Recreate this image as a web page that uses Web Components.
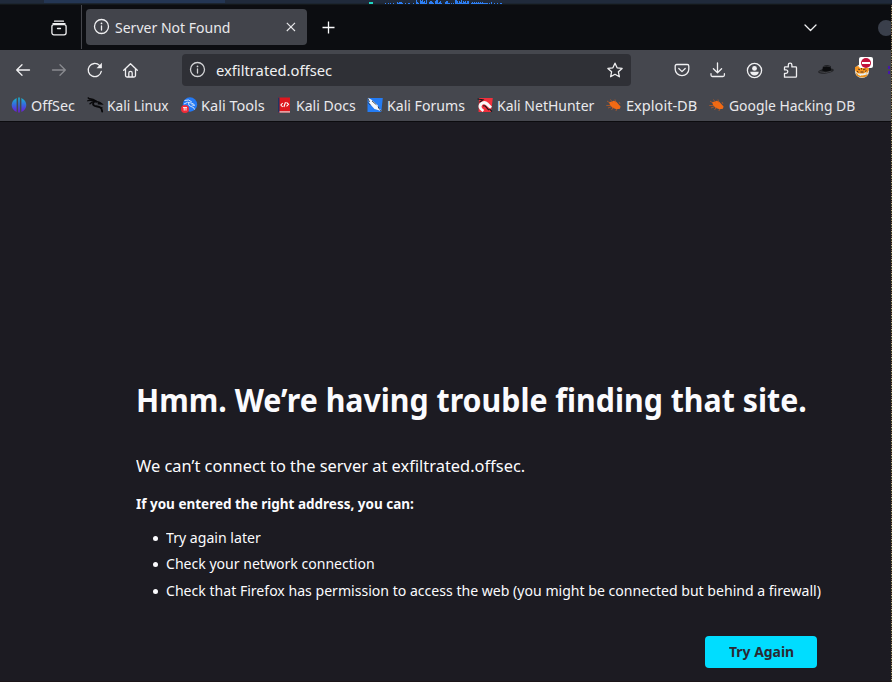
<!DOCTYPE html>
<html lang="en">
<head>
<meta charset="utf-8">
<title>Server Not Found</title>
<style>
html,body{margin:0;height:100%;overflow:hidden;background:#1c1b22}
body{font-family:"Noto Sans",sans-serif;color:#fbfbfe}
</style>
</head>
<body>
<browser-window></browser-window>
<script>
const define = (name, html, setup) => customElements.define(name, class extends HTMLElement {
  connectedCallback() {
    if (this.shadowRoot) return;
    const root = this.attachShadow({mode: 'open'});
    const t = document.createElement('template');
    t.innerHTML = html;
    root.append(t.content.cloneNode(true));
    if (setup) setup(this, root);
  }
});

/* Label condensed or widened horizontally so that it fills the given width */
define('ui-label', `<style>
:host{display:block;white-space:nowrap;flex:none}
span{display:inline-block;white-space:nowrap;transform-origin:0 50%}
</style><span><slot></slot></span>`, (el, root) => {
  const span = root.querySelector('span');
  const target = parseFloat(el.getAttribute('width'));
  el.style.width = target + 'px';
  const fit = () => {
    const natural = span.offsetWidth;
    if (natural) span.style.transform = `scaleX(${(target / natural).toFixed(4)})`;
  };
  fit();
  new ResizeObserver(fit).observe(span);
});

const line = b => `<g fill="none" stroke="#f0f0f2" stroke-width="1.300" stroke-linecap="round" stroke-linejoin="round">${b}</g>`;
const bug = `<path d="M3 5l2.500-.3 2-1 2.800 1 2.700 3 1.600 1.700-.7 2.300-3.200.6-3.900-1.400-2.600-2.400z" fill="#f26a14"/><path d="M1 4l3 2M.3 8.500h4M2 11l4-1.500M4.500 2.500l2 3M9 2.500l.5 3M5.500 13l2-3M14 7l-1-2M10 14l.5-2" stroke="#c95c20" stroke-width=".7" fill="none"/>`;
const icons = {
  view: line(`<path d="M3.500 1.200h9M2 3.600h12"/><rect x=".9" y="4.600" width="14.200" height="10.200" rx="2"/><path d="M6.500 8.500h3"/>`),
  info: line(`<circle cx="7.500" cy="7.500" r="7"/><path d="M7.500 7v4"/><path d="M7.500 4.300v.1" stroke-width="1.700"/>`),
  close: `<path d="M3.800 3.800l8.200 8.200M12 3.800l-8.200 8.200" stroke="#e8e8eb" stroke-width="1.100"/>`,
  plus: `<path d="M7.500 1.500v12M1.500 7.500h12" stroke="#fbfbfe" stroke-width="1.300"/>`,
  chevron: line(`<path d="M3 5l5.500 5.500L14 5"/>`),
  back: line(`<path d="M14.500 8H1.700M7 2.700L1.700 8 7 13.300"/>`),
  forward: line(`<path d="M1.500 8h12.800M9 2.700L14.300 8 9 13.300"/>`),
  reload: `<path d="M14.300 9.300A6.600 6.600 0 1 1 12.500 3.400" fill="none" stroke="#f0f0f2" stroke-width="1.300" stroke-linecap="round"/><path d="M14.900.8v5.400H9.500z" fill="#f0f0f2"/>`,
  home: line(`<path d="M.7 8.300L7.500 1.700 14.300 8.300M2.500 7v6.500q0 1.500 1.500 1.500h7q1.500 0 1.500-1.500V7M5.800 14.700v-3.600q0-1.700 1.700-1.700t1.700 1.700v3.600"/>`),
  star: line(`<path d="M8 1.200l2.100 4.600 5 .6-3.700 3.400 1 5L8 12.300l-4.400 2.500 1-5L.9 6.400l5-.6z"/>`),
  pocket: line(`<path d="M2.700 2.500h10.600q1.500 0 1.500 1.500v3.300a6.800 6.400 0 0 1-13.600 0V4Q1.200 2.500 2.700 2.500zM4.800 6.500L8 9.600l3.200-3.100"/>`),
  download: line(`<path d="M7.500 1v9.500M3.400 6.700L7.500 10.700l4.100-4M1 11.700v1.300q0 1.500 1.500 1.500h10.400q1.500 0 1.500-1.500v-1.300"/>`),
  account: line(`<circle cx="8.500" cy="8.500" r="7.100"/>`) + `<circle cx="8.500" cy="6.400" r="2.400" fill="#f0f0f2"/><path d="M4.200 9.800h8.600q-.6 3.700-4.300 3.800Q4.800 13.500 4.200 9.800z" fill="#f0f0f2"/>`,
  puzzle: line(`<path d="M2.500 15.200v-3.900h1.600a1.700 1.700 0 0 0 0-3.400H2.500V5.500q0-.6.6-.6h3.200V3a1.700 1.700 0 0 1 3.600 0v1.900h3.800q.8 0 .8.800v8.600q0 .9-.9.900z"/>`),
  hat: `<ellipse cx="8" cy="9" rx="7.900" ry="2.500" fill="#222326" transform="rotate(-7 8 9)"/><path d="M4.300 8.500L5 4.200q3.500-1.600 7.500-.3l.7 4.500q-4 2-8.900.1z" fill="#0b0c0e"/><path d="M1.500 9.700q6 2.200 12-.6" stroke="#55575c" stroke-width=".6" fill="none"/><path d="M5 4.600q3-.8 7 0" stroke="#44464b" stroke-width=".6" fill="none"/>`,
  fox: `<circle cx="8" cy="9" r="7" fill="#eef0ed"/><path d="M1 5l3-1 2 1.500h5L14 3l1 5-2 3.500H4L1.300 9z" fill="#f7941d"/><path d="M2 10.500Q6 15.500 14 12l-1.500 2.500Q7 17 2.500 13.500z" fill="#e8901c"/><path d="M4 7l2 .8M9 7.800l2.500-.8M6.500 10h3M3 9.200l1.500 1M11 9.500l1.500-1M7.500 6v1.500" stroke="#463223" stroke-width=".9"/><path d="M4 12l3 1.500M10 12l2.500-1.500" stroke="#d9f0f5" stroke-width="1.200"/>`,
  offsec: `<defs><linearGradient id="g" x2="0" y2="1"><stop offset="0" stop-color="#18b5cf"/><stop offset=".5" stop-color="#3767de"/><stop offset="1" stop-color="#6d19d8"/></linearGradient></defs><g fill="url(#g)"><path d="M5.600 1v14Q.7 12.500.7 8T5.600 1zM10.400 1v14q4.900-2.500 4.900-7t-4.900-7z"/><path d="M7.200.6h1.600v14.800H7.200z"/></g>`,
  kali: `<g fill="none" stroke="#09090b" stroke-linecap="round"><path d="M1.200.900L2.300 1.800Q6 1.600 9.500 4.300M.9 3.700Q4.500 2.600 8.500 4.500M3 6.700Q5.500 4 9.500 4.800" stroke-width="1.400"/><path d="M7 4.800q-2.400 2.800.8 4.100 2.700.7 4.600 1.100 2.500 1 2.800 4.600" stroke-width="1.800"/><path d="M8.500 4.500q3.500-.2 6 2.300l-3-.2" stroke-width="1.700"/><path d="M13.300 10.300l2 .5" stroke-width="1"/></g>`,
  tools: `<circle cx="9" cy="7.500" r="7.200" fill="#2479f4"/><path d="M3.500 3.500q4.500-1.700 7.300 1.400M3 7q3.500-3 7-1 3.500.7 3.500 2.500l-3-.7M7.500 5.500Q7 9 10 9.500q3.500.7 3.500 3" fill="none" stroke="#cfe2fb" stroke-width="1"/><circle cx="4" cy="12" r="4" fill="#f02b38"/><path d="M2 10.600h4M3.200 10.600v3M5 10.600v3" stroke="#fff" stroke-width=".9"/>`,
  docs: `<path d="M2 .5h12v15H2z" fill="#de171e"/><path d="M2 .5h1.500v15H2z" fill="#203563"/><path d="M3.500 14.300H14v1.200H3.500z" fill="#e9d9d9"/><path d="M6.700 6L4.900 8l1.800 2M10.500 5.300L12.500 7.300l-2 2M9.500 5.300L7.900 10" fill="none" stroke="#fff" stroke-width="1.100"/>`,
  forums: `<path d="M.5 1h15.300l-1.500 14H.5z" fill="#247cf4"/><path d="M.5.500l4 2.300 6 5.300 1 2.700 4 4-4.500-1.700-3.500-1L2.500 6.500z" fill="#f5f7fa"/><path d="M.5.500l2 4.500M1 5.500l2.500 2.700M5 4l4.500 3.800M11 9.500l1.500 3M13 13.300l2.500 1.500" stroke="#202735" stroke-width=".8"/>`,
  hunter: `<path d="M2 1h13.800l-1.700 14H1.500z" fill="#f1303c"/><path d="M2.700 12.500Q0 9 3.200 5.600q4.300-3.400 8 .2l3.800 4-2 2-4-3.600Q6.800 6.500 5.200 8q-1.500 1.700 0 3.200l2 1.800-1.600 2z" fill="#f8f8f8"/><path d="M.5 2l5.500.8L2.500 5.300M6 9q2-.8 2.800.7l3 3.500M12.400 11.800l2.600 2.700" stroke="#16171b" stroke-width="1.100" fill="none"/>`,
  bug
};
define('ui-icon', `<style>:host{display:block;flex:none;width:16px;height:16px}svg{display:block;width:100%;height:100%;overflow:visible}</style>`, (el, root) => {
  const t = document.createElement('template');
  t.innerHTML = `<svg viewBox="0 0 16 16">${icons[el.getAttribute('name')]}</svg>`;
  root.append(t.content);
});

/* Strip of the desktop panel above the window, with its activity graph */
const bars = [75,1,84,1,90,1,99,1,111,2,114,1,117,2,120,2,123,2,126,1,135,1,144,1,147,1,159,1,168,4,171,2,174,1,180,4,183,3,186,4,189,2,192,3,195,1,198,4,207,2,210,3,213,3,216,2,219,1,225,3,228,4,231,4,234,1,237,2,240,3,243,1,255,2,258,3,261,3,264,1,267,1,273,1,279,1,285,4,288,4,291,3,294,1,297,3,300,2,303,4,306,1,309,3,312,2,315,3,318,1,321,3,324,3,333,1,336,2,339,1,342,2,345,1,348,2,351,1,354,2,357,1,360,2,363,1,366,2,369,1,372,1,375,1,378,1,381,1,387,1,393,2,402,1,411,1,420,1,423,1];
let rects = '';
for (let i = 0; i < bars.length; i += 2) rects += `<rect x="${360 + bars[i] / 3}" y="${4 - bars[i + 1]}" width="1" height="${bars[i + 1]}"/>`;
define('desktop-strip', `<style>:host{display:block;height:5px;background:linear-gradient(#202a3b 0 3px,#1c2531 3px 4px,#14181b 4px)}svg{display:block}</style>
<svg width="892" height="4" shape-rendering="crispEdges"><rect x="44" width="181" height="3" fill="#243654"/><rect x="369" y="2" width="4" height="2" fill="#20d5c0"/><g fill="#2d7ff5">${rects}</g></svg>`);

define('tab-bar', `<style>
:host{display:flex;height:45px;background:#0c0d11;align-items:center;font-size:15px;overflow:hidden;color:#e9e9ec}
.view{width:81px;box-sizing:border-box;padding-left:51px}
.sep{width:1px;height:44px;background:#45464c;align-self:flex-start}
.tab{margin:-1px 0 0 4px;width:221px;height:36px;border-radius:4px;background:#42444b;display:flex;align-items:center;padding:0 8px;box-sizing:border-box}
.tab ui-label{margin-left:5px}
.close{margin-left:auto}
.plus{margin-left:14px}
.chev{margin-left:auto;margin-right:60px}
.dot{width:16px;height:16px;border-radius:50%;background:#3a3f4b;margin-right:-2px;flex:none}
</style>
<div class="view"><ui-icon name="view"></ui-icon></div><div class="sep"></div>
<div class="tab"><ui-icon name="info"></ui-icon><ui-label width="115"><slot></slot></ui-label><ui-icon class="close" name="close"></ui-icon></div>
<ui-icon class="plus" name="plus"></ui-icon><ui-icon class="chev" name="chevron"></ui-icon><div class="dot"></div>`);

define('nav-bar', `<style>
:host{display:flex;height:40px;align-items:center;padding-left:15px;box-sizing:border-box;font-size:15px;color:#f0f0f2}
.nav{display:flex;gap:20px;width:167px}
.url{width:449px;height:32px;border-radius:4px;background:#2f3036;display:flex;align-items:center;box-sizing:border-box;padding:0 8px}
.url ui-label{margin-left:10px}
.star{margin-left:auto}
.tools{display:flex;gap:20px;margin-left:43px;align-items:center}
.ext{position:relative}
.badge{position:absolute;left:5px;top:-5px;width:14px;height:11px;background:#fff;border-radius:2px;display:grid;place-items:center}
.badge i{width:10px;height:10px;border-radius:50%;background:#c3123c;display:grid;place-items:center}
.badge i::after{content:"";width:8px;height:2px;background:#fff}
.more{width:2px;height:8px;background:linear-gradient(#4518a8 3px,transparent 3px 5px,#4518a8 5px);position:absolute;left:34px;top:4px}
</style>
<div class="nav"><ui-icon name="back"></ui-icon><ui-icon name="forward" style="opacity:.4"></ui-icon><ui-icon name="reload"></ui-icon><ui-icon name="home"></ui-icon></div>
<div class="url"><ui-icon name="info" style="opacity:.85"></ui-icon><ui-label width="116"><slot></slot></ui-label><ui-icon class="star" name="star"></ui-icon></div>
<div class="tools"><ui-icon name="pocket"></ui-icon><ui-icon name="download"></ui-icon><ui-icon name="account"></ui-icon><ui-icon name="puzzle"></ui-icon><ui-icon name="hat"></ui-icon><div class="ext"><ui-icon name="fox"></ui-icon><span class="badge"><i></i></span><span class="more"></span></div></div>`);

define('book-mark', `<style>:host{display:flex;align-items:center;gap:4px}</style><ui-icon></ui-icon><slot></slot>`, (el, root) => {
  const old = root.querySelector('ui-icon'), n = document.createElement('ui-icon');
  n.setAttribute('name', el.getAttribute('icon'));
  old.replaceWith(n);
});

const marks = [['offsec','OffSec',44],['kali','Kali Linux',62],['tools','Kali Tools',64],['docs','Kali Docs',60],['forums','Kali Forums',78],['hunter','Kali NetHunter',97],['bug','Exploit-DB',71],['bug','Google Hacking DB',126]];
define('bookmarks-bar', `<style>:host{display:grid;grid-template-columns:76px 93.500px 95px 91.500px 109.500px 129.500px 103px 1fr;height:30px;align-items:center;padding-left:11px;font-size:15px;box-sizing:border-box;color:#e9e9ec}</style>
${marks.map(([i, t, w]) => `<book-mark icon="${i}"><ui-label width="${w}">${t}</ui-label></book-mark>`).join('')}`);

define('retry-button', `<style>:host{display:grid;place-items:center;width:112px;height:32px;border-radius:4px;background:#00ddff;color:#2b2a33;font-size:15px;font-weight:700;margin-left:569px;box-sizing:border-box;padding-bottom:2px}</style><ui-label width="65"><slot></slot></ui-label>`);

define('error-page', `<style>
:host{display:block;padding:252px 0 0 136px;box-sizing:border-box;flex:1;background:#1c1b22;overflow:hidden;border-bottom:1px solid #1b1519}
h1{margin:0;font-size:33px;line-height:52px;font-weight:700;height:52px}
p{margin:0;font-size:17px;line-height:24px;margin-top:28px;height:24px}
h2{margin:13px 0 0;font-size:15px;line-height:24px;font-weight:700;height:24px}
ul{margin:9px 0 0;padding:0 0 0 30px;font-size:15px;line-height:26px;list-style:none}
li{height:26px;display:flex;align-items:center;margin-left:-13px;gap:8px}
li:last-child{margin-top:1px}
li::before{content:"";width:5px;height:5px;border-radius:50%;background:#fbfbfe;margin-top:2px}
retry-button{margin-top:32.500px}
</style>
<h1><ui-label width="671">Hmm. We’re having trouble finding that site.</ui-label></h1>
<p><ui-label width="389">We can’t connect to the server at exfiltrated.offsec.</ui-label></p>
<h2><ui-label width="278">If you entered the right address, you can:</ui-label></h2>
<ul><li><ui-label width="95">Try again later</ui-label></li><li><ui-label width="209">Check your network connection</ui-label></li><li><ui-label width="655">Check that Firefox has permission to access the web (you might be connected but behind a firewall)</ui-label></li></ul>
<retry-button style="margin-top:33px">Try Again</retry-button>`);

define('browser-window', `<style>
:host{display:flex;flex-direction:column;width:892px;height:682px;position:relative;overflow:hidden}
.chrome{background:#45474e;height:71px}
.line{height:1px;background:#0c0c0f}
.edge{position:absolute;right:0;top:5px;width:1px;bottom:0;background:repeating-linear-gradient(#77604a 0 1px,#2b211c 1px 2px,#b8a77e 2px 3px,#3d3d29 3px 5px,#958159 5px 6px,#1c1514 6px 7px)}
</style>
<desktop-strip></desktop-strip><tab-bar>Server Not Found</tab-bar>
<div class="chrome"><nav-bar>exfiltrated.offsec</nav-bar><bookmarks-bar></bookmarks-bar></div><div class="line"></div>
<error-page></error-page><div class="edge"></div>`);
</script>
</body>
</html>
